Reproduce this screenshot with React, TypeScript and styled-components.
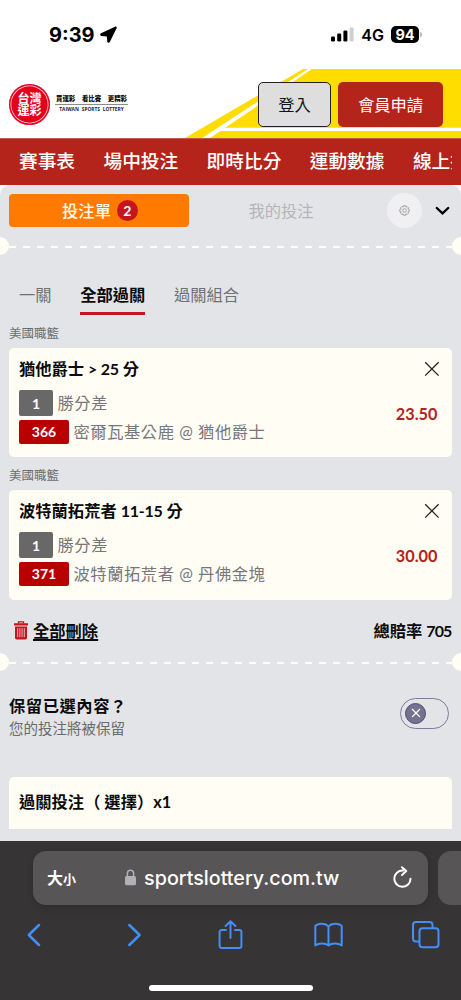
import React from "react";
import styled, { createGlobalStyle } from "styled-components";

const cream = "#fffdf4";
const brandRed = "#b5241b";
const cjk = `"Noto Sans CJK TC", sans-serif`;

const GlobalStyle = createGlobalStyle`
  * { box-sizing: border-box; }
  body {
    margin: 0;
    background: ${cream};
    font-family: Lato, ${cjk};
    color: #0b0b0d;
    overflow: hidden;
  }
  button { font: inherit; border: 0; padding: 0; background: none; color: inherit; }
`;

const Phone = styled.div`
  width: 461px;
  height: 1000px;
  display: flex;
  flex-direction: column;
  overflow: hidden;
  white-space: nowrap;
`;

/* ---------- status bar ---------- */
const StatusBar = styled.div`
  height: 69px;
  flex: none;
  display: flex;
  justify-content: space-between;
  align-items: center;
  padding: 0 39px 0 49px;
  background: #fff;
  color: #000;
  font-family: Inter, sans-serif;
`;
const Clock = styled.div`
  display: flex;
  align-items: center;
  gap: 5px;
  font-size: 20px;
  font-weight: 700;
  line-height: 24px;
`;
const Signals = styled.div`
  display: flex;
  align-items: center;
  gap: 7px;
`;
const Network = styled.span`
  font-size: 16px;
  font-weight: 600;
  line-height: 20px;
`;
const Battery = styled.div`
  display: flex;
  align-items: center;
  gap: 1px;
  &::after {
    content: "";
    width: 2px;
    height: 5px;
    border-radius: 0 2px 2px 0;
    background: #b9b9b9;
  }
`;
const BatteryLevel = styled.span`
  width: 28px;
  height: 17px;
  border-radius: 5px;
  background: #000;
  color: #fff;
  font-size: 14.5px;
  font-weight: 700;
  line-height: 17px;
  text-align: center;
`;

/* ---------- site header ---------- */
const Header = styled.header`
  height: 70px;
  flex: none;
  display: flex;
  align-items: center;
  position: relative;
  padding: 0 18px 0 9px;
  background: #fff;
`;
const HeaderArt = styled.svg`
  position: absolute;
  inset: 0;
`;
const Logo = styled.div`
  position: relative;
  display: flex;
  align-items: center;
  gap: 5px;
  flex: 1;
`;
const Seal = styled.div`
  width: 41px;
  height: 41px;
  border-radius: 50%;
  background: #e3001b;
  display: flex;
  align-items: center;
  justify-content: center;
  box-shadow: inset 0 0 0 1.5px #e3001b, inset 0 0 0 2.3px #ffd9dc;
  color: #fff;
  font: 700 12.1px/12.2px ${cjk};
  text-align: center;
`;
const Slogan = styled.div`
  width: 73px;
  display: flex;
  flex-direction: column;
  padding-bottom: 2px;
`;
const SloganLine = styled.div`
  display: flex;
  justify-content: space-between;
  padding: 0 1px;
  height: 11px;
  border-bottom: 1px solid #8b8b8b;
  font: 900 6.4px/9px ${cjk};
`;
const SloganLatin = styled.div`
  text-align: center;
  font: 700 4.8px/8px "Open Sans", sans-serif;
  word-spacing: 1.7px;
  color: #222;
`;
const HeaderActions = styled.div`
  position: relative;
  display: flex;
  gap: 7px;
`;
const HeaderButton = styled.button<{ $primary?: boolean }>`
  width: ${(p) => (p.$primary ? 105 : 73)}px;
  height: 45px;
  padding-bottom: 1px;
  border-radius: 5px;
  border: ${(p) => (p.$primary ? "0" : "1px solid #222")};
  background: ${(p) => (p.$primary ? brandRed : "#dedede")};
  color: ${(p) => (p.$primary ? "#fff" : "#111")};
  font-size: 16.3px;
`;

const Nav = styled.nav`
  height: 45.5px;
  flex: none;
  background: ${brandRed};
  padding: 0 9px 0 19px;
`;
const NavList = styled.div`
  display: flex;
  gap: 28.4px;
  overflow: hidden;
  font-size: 18.7px;
  font-weight: 500;
  line-height: 45px;
  color: #fff;
`;

/* ---------- bet slip ---------- */
const Slip = styled.main`
  flex: 1;
  background: #e3e4e7;
  border-radius: 10px 10px 0 0;
  display: flex;
  flex-direction: column;
`;
const SlipTabs = styled.div`
  height: 52.5px;
  display: flex;
  align-items: center;
  padding: 0 11px 0 9px;
`;
const SlipTab = styled.button<{ $active?: boolean }>`
  width: ${(p) => (p.$active ? 180 : 184)}px;
  height: 33px;
  padding: 0 0 2px ${(p) => (p.$active ? 2 : 0)}px;
  display: flex;
  align-items: center;
  justify-content: center;
  gap: 6px;
  border-radius: 4px;
  background: ${(p) => (p.$active ? "#ff7a00" : "transparent")};
  color: ${(p) => (p.$active ? "#fff8e8" : "#b4b5b7")};
  font-size: 16.3px;
  font-weight: ${(p) => (p.$active ? 500 : 400)};
`;
const Count = styled.span`
  width: 21px;
  height: 21px;
  margin-top: 2px;
  border-radius: 50%;
  background: #c4161c;
  color: #fff;
  font-size: 14px;
  font-weight: 700;
  line-height: 21px;
`;
const GearButton = styled.button`
  width: 35px;
  height: 35px;
  margin-left: 14px;
  border-radius: 50%;
  background: #f0f0f2;
  display: grid;
  place-items: center;
`;
const Collapse = styled.button`
  display: flex;
  margin-left: auto;
`;

const Perforation = styled.div`
  height: 18px;
  flex: none;
  display: flex;
  align-items: center;
  justify-content: space-between;
  &::before,
  &::after {
    content: "";
    width: 9px;
    height: 18px;
    background: ${cream};
  }
  &::before { border-radius: 0 9px 9px 0; }
  &::after { border-radius: 9px 0 0 9px; }
`;
const Dashes = styled.div`
  flex: 1;
  height: 2px;
  margin-top: 2px;
  background: repeating-linear-gradient(90deg, ${cream} 0 7px, transparent 7px 14.1px);
`;

const ModeTabs = styled.div`
  height: 60px;
  flex: none;
  display: flex;
  align-items: flex-end;
  gap: 28.6px;
  padding-left: 19px;
`;
const ModeTab = styled.button<{ $active?: boolean }>`
  height: 40px;
  border-bottom: 3.5px solid ${(p) => (p.$active ? "#c4161c" : "transparent")};
  color: ${(p) => (p.$active ? "#0b0b0d" : "#717275")};
  font-size: 16.3px;
  font-weight: ${(p) => (p.$active ? 700 : 400)};
  line-height: 33px;
  padding-top: 2px;
`;

const Body = styled.div`
  padding: 0 9.5px 0 9px;
  display: flex;
  flex-direction: column;
`;
const League = styled.div`
  height: 33px;
  padding-top: 3px;
  font-size: 12.5px;
  line-height: 32px;
  color: #6a6b6d;
`;
const BetCard = styled.article`
  height: 109.3px;
  padding: 5px 12px 13px 10px;
  border-radius: 5px;
  background: ${cream};
  display: flex;
  flex-direction: column;
`;
const BetHeading = styled.div`
  height: 30px;
  display: flex;
  align-items: center;
  justify-content: space-between;
  font-size: 16.3px;
  font-weight: 700;
  svg { margin-top: 2px; }
`;
const Latin = styled.span<{ $tight?: boolean }>`
  font-size: 16px;
  letter-spacing: ${(p) => (p.$tight ? -0.9 : -0.25)}px;
`;
const BetBody = styled.div`
  display: flex;
  align-items: center;
  justify-content: space-between;
  padding: 7px 2px 0 0;
`;
const BetLines = styled.div`
  display: flex;
  flex-direction: column;
  gap: 4px;
`;
const BetLine = styled.div`
  display: flex;
  align-items: center;
  gap: 4.5px;
  font-size: 16.3px;
  line-height: 24px;
  letter-spacing: 0.55px;
  color: #77777a;
`;
const Tag = styled.span<{ $tone: "grey" | "red" }>`
  width: ${(p) => (p.$tone === "red" ? 50 : 34)}px;
  height: ${(p) => (p.$tone === "red" ? 24 : 26)}px;
  border-radius: 2px;
  background: ${(p) => (p.$tone === "red" ? "#b90000" : "#686868")};
  color: #fff;
  font-size: 14px;
  font-weight: 700;
  line-height: ${(p) => (p.$tone === "red" ? 24 : 27)}px;
  letter-spacing: 0;
  text-align: center;
`;
const Odds = styled.strong`
  font-size: 16.3px;
  line-height: 20px;
  color: ${brandRed};
  margin-top: -6px;
`;

const Summary = styled.div`
  height: 53.4px;
  display: flex;
  align-items: center;
  justify-content: space-between;
  padding: 7px 0 0 5px;
  font-size: 16.3px;
  font-weight: 700;
`;
const ClearAll = styled.button`
  display: flex;
  align-items: center;
  gap: 5px;
  text-decoration: underline;
  text-decoration-thickness: 1.5px;
  text-underline-offset: 2px;
  svg { margin-top: 1px; }
`;

const KeepRow = styled.div`
  height: 106px;
  display: flex;
  align-items: center;
  justify-content: space-between;
  padding: 0 2.5px 13px 0;
`;
const KeepTitle = styled.div`
  font-size: 16.3px;
  font-weight: 700;
  line-height: 22px;
  letter-spacing: 0.55px;
`;
const KeepNote = styled.div`
  font-size: 14.5px;
  line-height: 23px;
  color: #6a6b6d;
`;
const Toggle = styled.button`
  width: 49px;
  height: 31px;
  margin-bottom: 8px;
  border: 1px solid #7c7aa0;
  border-radius: 16px;
  padding-left: 4px;
  display: flex;
  align-items: center;
`;
const Knob = styled.span`
  width: 21px;
  height: 21px;
  border-radius: 50%;
  border: 1px solid #4b4a78;
  background: #74728f;
  display: grid;
  place-items: center;
`;
const ComboCard = styled.section`
  height: 52px;
  padding-left: 10px;
  border-radius: 5px 5px 0 0;
  background: ${cream};
  font-size: 16.3px;
  font-weight: 700;
  line-height: 50px;
`;

/* ---------- browser chrome ---------- */
const Browser = styled.footer`
  height: 159px;
  flex: none;
  background: #373435;
  display: flex;
  flex-direction: column;
  padding-top: 9.5px;
`;
const AddressRow = styled.div`
  display: flex;
  gap: 10.5px;
  padding-left: 33px;
`;
const AddressBar = styled.div`
  width: 394.5px;
  height: 54.5px;
  flex: none;
  border-radius: 13px;
  background: #575556;
  box-shadow: 0 2px 8px rgba(0, 0, 0, 0.16);
  display: flex;
  align-items: center;
  justify-content: space-between;
  padding: 0 16px 0 14px;
  color: #fff;
`;
const NextTab = styled.div`
  flex: 1;
  border-radius: 13px 0 0 13px;
  background: #575556;
`;
const TextSize = styled.div`
  width: 42px;
  font: 700 16px/24px ${cjk};
  small { font-size: 13px; }
`;
const Url = styled.div`
  display: flex;
  align-items: center;
  gap: 8px;
  margin-right: 17px;
  font: 500 19.7px/24px Inter, sans-serif;
`;
const Toolbar = styled.div`
  height: 60px;
  margin: 0 -14px;
  display: grid;
  grid-template-columns: repeat(5, 1fr);
  align-items: center;
  justify-items: center;
`;
const HomeIndicator = styled.div`
  width: 164px;
  height: 6px;
  margin: 20px auto 0;
  border-radius: 3px;
  background: #fff;
`;

const CloseIcon = () => (
  <svg width="16" height="16" viewBox="0 0 16 16" fill="none" stroke="#222" strokeWidth="1.3">
    <path d="M1.2 1.2 14.6 14.6M14.6 1.2 1.2 14.6" />
  </svg>
);

const TrashIcon = () => (
  <svg width="14" height="19" viewBox="0 0 14 19" fill="none">
    <path d="M4.5 2.4V.8h5v1.6" stroke="#c4161c" strokeWidth="1.3" />
    <path d="M0 2.2h14v2.2H0zM1 5.4h12v11.4a1.6 1.6 0 0 1-1.6 1.6H2.6A1.6 1.6 0 0 1 1 16.8z" fill="#c4161c" />
    <path d="M3.7 7.2v9M5.9 7.2v9M8.1 7.2v9M10.3 7.2v9" stroke="#f3dcdd" strokeWidth=".8" />
  </svg>
);

const GearIcon = () => (
  <svg width="11" height="11" viewBox="0 0 22 22" fill="none" stroke="#909092" strokeWidth="1.6">
    <path d="M9 1.5h4l.7 2.7 2.5-1.4 2.9 2.9-1.4 2.4 2.8.8v4l-2.8.8 1.4 2.5-2.9 2.9-2.5-1.4-.7 2.8H9l-.7-2.8-2.5 1.4-2.9-2.9 1.4-2.5-2.8-.8v-4l2.8-.8-1.4-2.4 2.9-2.9 2.5 1.4z" />
    <circle cx="11" cy="11" r="3.6" />
  </svg>
);

type Bet = { team: string; margin: string; code: string; match: string; odds: string };

const bets: Bet[] = [
  { team: "猶他爵士", margin: "> 25", code: "366", match: "密爾瓦基公鹿 @ 猶他爵士", odds: "23.50" },
  { team: "波特蘭拓荒者", margin: "11-15", code: "371", match: "波特蘭拓荒者 @ 丹佛金塊", odds: "30.00" },
];

export default function App() {
  return (
    <Phone lang="zh-Hant">
      <GlobalStyle />
      <StatusBar>
        <Clock>
          9:39
          <svg width="17" height="17" viewBox="0 0 17 17">
            <path d="M15 .7 1 7.2c-1.200.6-1 2.500.3 2.700l5.500.6.5 5.200c.2 1.300 1.900 1.500 2.500.3L16.600 2.300c.5-1.100-.5-2.100-1.600-1.600z" />
          </svg>
        </Clock>
        <Signals>
          <svg width="23" height="15" viewBox="0 0 23 15">
            <rect x="0" y="9.5" width="4" height="5" rx="1.2" />
            <rect x="6.2" y="6.5" width="4" height="8" rx="1.2" />
            <rect x="12.4" y="3.5" width="4" height="11" rx="1.2" />
            <rect x="18.6" y="0.5" width="4" height="14" rx="1.2" fill="#cfcfcf" />
          </svg>
          <Network>4G</Network>
          <Battery>
            <BatteryLevel>94</BatteryLevel>
          </Battery>
        </Signals>
      </StatusBar>

      <Header>
        <HeaderArt width="461" height="70" viewBox="0 0 461 70">
          <path d="M303 0H461V69H185z" fill="#ffdd00" />
          <path d="M308 0h4L210 69h-8z" fill="#fff" />
          <path d="M219 58.7H461v3.3H214z" fill="#fff" />
          <path d="M0 69h461v1H0z" fill="#c4574d" />
        </HeaderArt>
        <Logo>
          <Seal>
            台灣
            <br />
            運彩
          </Seal>
          <Slogan>
            <SloganLine>
              <span>買運彩</span>
              <span>看比賽</span>
              <span>更精彩</span>
            </SloganLine>
            <SloganLatin>TAIWAN SPORTS LOTTERY</SloganLatin>
          </Slogan>
        </Logo>
        <HeaderActions>
          <HeaderButton>登入</HeaderButton>
          <HeaderButton $primary>會員申請</HeaderButton>
        </HeaderActions>
      </Header>

      <Nav>
        <NavList>
          <span>賽事表</span>
          <span>場中投注</span>
          <span>即時比分</span>
          <span>運動數據</span>
          <span>線上投注</span>
        </NavList>
      </Nav>

      <Slip>
        <SlipTabs>
          <SlipTab $active>
            投注單 <Count>2</Count>
          </SlipTab>
          <SlipTab>我的投注</SlipTab>
          <GearButton>
            <GearIcon />
          </GearButton>
          <Collapse>
            <svg width="15" height="10" viewBox="0 0 15 10" fill="none" stroke="#000" strokeWidth="2.4" strokeLinecap="round">
              <path d="M1.8 2 7.5 7.4 13.2 2" />
            </svg>
          </Collapse>
        </SlipTabs>
        <Perforation>
          <Dashes />
        </Perforation>
        <ModeTabs>
          <ModeTab>一關</ModeTab>
          <ModeTab $active>全部過關</ModeTab>
          <ModeTab>過關組合</ModeTab>
        </ModeTabs>
        <Body>
          {bets.map((bet) => (
            <React.Fragment key={bet.code}>
              <League>美國職籃</League>
              <BetCard>
                <BetHeading>
                  <span>
                    {bet.team} <Latin>{bet.margin}</Latin> 分
                  </span>
                  <CloseIcon />
                </BetHeading>
                <BetBody>
                  <BetLines>
                    <BetLine>
                      <Tag $tone="grey">1</Tag>勝分差
                    </BetLine>
                    <BetLine>
                      <Tag $tone="red">{bet.code}</Tag>
                      {bet.match}
                    </BetLine>
                  </BetLines>
                  <Odds>{bet.odds}</Odds>
                </BetBody>
              </BetCard>
            </React.Fragment>
          ))}
          <Summary>
            <ClearAll>
              <TrashIcon />
              全部刪除
            </ClearAll>
            <span>
              總賠率 <Latin $tight>705</Latin>
            </span>
          </Summary>
        </Body>
        <Perforation>
          <Dashes />
        </Perforation>
        <Body>
          <KeepRow>
            <div>
              <KeepTitle>保留已選內容？</KeepTitle>
              <KeepNote>您的投注將被保留</KeepNote>
            </div>
            <Toggle>
              <Knob>
                <svg width="10" height="10" viewBox="0 0 10 10" stroke="#fff" strokeWidth="1.2">
                  <path d="M1 1l8 8M9 1 1 9" />
                </svg>
              </Knob>
            </Toggle>
          </KeepRow>
          <ComboCard>過關投注（ 選擇）x1</ComboCard>
        </Body>
      </Slip>

      <Browser>
        <AddressRow>
          <AddressBar>
            <TextSize>
              大<small>小</small>
            </TextSize>
            <Url>
              <svg width="11" height="17" viewBox="0 0 11 17" fill="none">
                <path d="M2.4 8V4.3a3.1 3.1 0 0 1 6.2 0V8" stroke="#b2afb6" strokeWidth="1.5" />
                <rect y="7" width="11" height="9.3" rx="1.6" fill="#b2afb6" />
              </svg>
              sportslottery.com.tw
            </Url>
            <svg width="19" height="23" viewBox="0 0 19 23" fill="none" stroke="#fff" strokeWidth="2" strokeLinecap="round" strokeLinejoin="round">
              <path d="M9.8 4.6A8.1 8.1 0 1 0 17.5 12.7M9 1.2l4.2 3.9L9 9" />
            </svg>
          </AddressBar>
          <NextTab />
        </AddressRow>
        <Toolbar>
          <svg width="16" height="24" viewBox="0 0 16 24" fill="none" stroke="#438ef7" strokeWidth="2.5" strokeLinecap="round" strokeLinejoin="round">
            <path d="M12 2 1.8 12 12 22" />
          </svg>
          <svg width="16" height="24" viewBox="0 0 16 24" fill="none" stroke="#438ef7" strokeWidth="2.5" strokeLinecap="round" strokeLinejoin="round">
            <path d="M4.3 2l10.3 10L4.3 22" />
          </svg>
          <svg width="25" height="32" viewBox="0 0 25 32" fill="none" stroke="#438ef7" strokeWidth="2" strokeLinecap="round" strokeLinejoin="round">
            <path d="M8 11H3.6A2 2 0 0 0 1.6 13v14a2 2 0 0 0 2 2h17.8a2 2 0 0 0 2-2V13a2 2 0 0 0-2-2H17M12.5 19V2.2M7.6 7l4.9-4.9L17.4 7" />
          </svg>
          <svg width="29" height="26" viewBox="0 0 29 26" fill="none" stroke="#438ef7" strokeWidth="2" strokeLinejoin="round">
            <path d="M14.5 4.4C11.5 1.3 5 .9 1.3 3.8v19.7c3.7-2.7 10-2.4 13.2 0 3.2-2.4 9.5-2.7 13.2 0V3.8C24 .9 17.5 1.3 14.5 4.4zM14.5 4.4v19.1" />
          </svg>
          <svg width="28" height="28" viewBox="0 0 28 28" fill="none" stroke="#438ef7" strokeWidth="2">
            <path d="M7.5 20.5H4a3 3 0 0 1-3-3V4a3 3 0 0 1 3-3h13.5a3 3 0 0 1 3 3v3" />
            <rect x="7.5" y="7.2" width="19" height="19" rx="3" />
          </svg>
        </Toolbar>
        <HomeIndicator />
      </Browser>
    </Phone>
  );
}
